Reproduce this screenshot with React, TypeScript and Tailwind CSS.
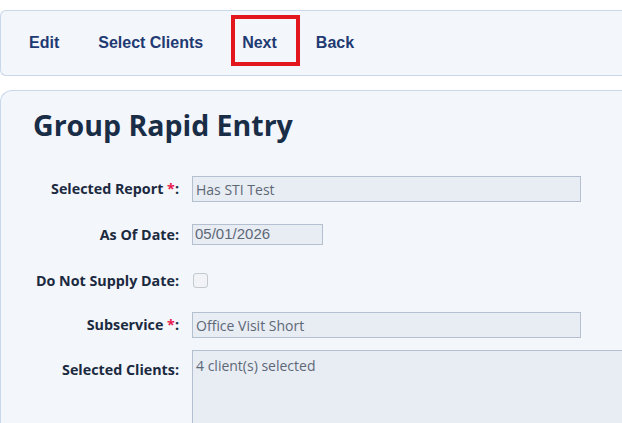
const links = ["Edit", "Select Clients", "Next", "Back"];

const Toolbar = () => {
  return (
    <div className="mt-[10px] flex h-[66px] flex-row items-center rounded-l-md border border-r-0 border-[#c9d7eb] bg-[#f3f6fb] pl-[28px] font-['Liberation_Sans',Arial,sans-serif] text-[16px] font-bold text-[#1f3a72]">
      {links.map((label) => (
        <div key={label} className="relative mr-[39px]">
          {label === "Next" && (
            <span className="pointer-events-none absolute left-[-11px] top-[-16px] h-[51px] w-[69px] border-4 border-[#e3161d]" />
          )}
          <span className="cursor-pointer">{label}</span>
        </div>
      ))}
    </div>
  );
};

const Label = ({ text, required }: { text: string; required?: boolean }) => (
  <label className="block w-[178px] shrink-0 text-right text-[14.3px] leading-[20px] font-bold text-[#1b2a3f]">
    {text}
    {required && <span className="text-[#e8194a]"> *</span>}:
  </label>
);

const inputCls =
  "h-[26px] border border-[#b4c0cf] bg-[#e8ecf3] px-[3px] text-[14px] text-[#5d6877] outline-none";

const App = () => {
  return (
    <div className="min-h-[423px] w-[622px] overflow-hidden bg-white font-['Open_Sans','Noto_Sans',sans-serif]">
      <Toolbar />
      <div className="mt-[14px] min-h-[340px] rounded-tl-[12px] border border-r-0 border-b-0 border-[#c9d7eb] bg-[#f3f6fb] pl-[32px] pt-[14px]">
        <h1 className="text-[28.5px] leading-[40px] font-bold text-[#1a2d47]">
          Group Rapid Entry
        </h1>

        <div className="ml-[-32px] mt-[31px] flex flex-col">
          <div className="flex h-[26px] flex-row items-center gap-[13px]">
            <Label text="Selected Report" required />
            <input readOnly value="Has STI Test" className={`${inputCls} w-[389px]`} />
          </div>

          <div className="mt-[22px] flex h-[21px] flex-row items-center gap-[13px]">
            <Label text="As Of Date" />
            <input
              readOnly
              value="05/01/2026"
              className="h-[21px] w-[131px] border border-[#b4c0cf] bg-[#e8ecf3] px-[2px] font-['Liberation_Sans',Arial,sans-serif] text-[15px] text-[#5d6877] outline-none"
            />
          </div>

          <div className="mt-[28px] flex h-[15px] flex-row items-center gap-[13px]">
            <Label text="Do Not Supply Date" />
            <span className="ml-[1px] h-[15px] w-[15px] rounded-[3px] border border-[#c4c9d0] bg-[#f1f3f6]" />
          </div>

          <div className="mt-[24px] flex h-[26px] flex-row items-center gap-[13px]">
            <Label text="Subservice" required />
            <input readOnly value="Office Visit Short" className={`${inputCls} w-[389px]`} />
          </div>

          <div className="mt-[12px] flex flex-row items-start gap-[13px]">
            <div className="w-[178px] shrink-0 pt-[10px]">
              <Label text="Selected Clients" />
            </div>
            <textarea
              readOnly
              value="4 client(s) selected"
              className="h-[90px] flex-1 resize-none border border-r-0 border-[#b4c0cf] bg-[#e8ecf3] px-[3px] py-[4px] text-[14px] text-[#5d6877] outline-none"
            />
          </div>
        </div>
      </div>
    </div>
  );
};

export default App;
